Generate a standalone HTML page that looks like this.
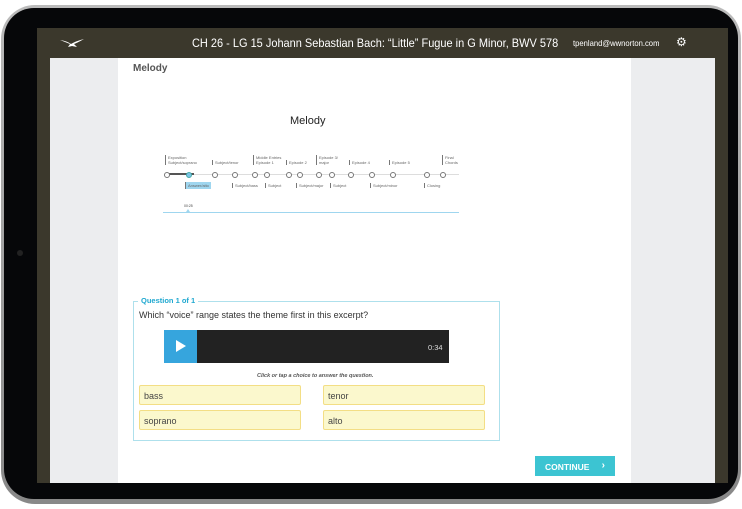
<!DOCTYPE html>
<html><head><style>
*{margin:0;padding:0;box-sizing:border-box}
body{width:742px;height:509px;background:#fff;position:relative;overflow:hidden;font-family:"Liberation Sans",sans-serif}
.frame{position:absolute;left:1px;top:5px;width:740px;height:499px;border-radius:34px;background:linear-gradient(#bbb,#888);}
.bez{position:absolute;left:4px;top:8px;width:734px;height:491px;border-radius:30px;background:#060709}
.cam{position:absolute;left:17px;top:250px;width:6px;height:6px;border-radius:50%;background:#222}
.screen{position:absolute;left:37px;top:28px;width:691px;height:455px;background:#3b382c;overflow:hidden}
.hdr{position:absolute;left:0;top:0;width:691px;height:30px;color:#fff}
.left{position:absolute;left:13px;top:30px;width:68px;height:425px;background:#ecedef}
.main{position:absolute;left:81px;top:30px;width:513px;height:425px;background:#fff}
.right{position:absolute;left:594px;top:30px;width:84px;height:425px;background:#ecedef}
.t{position:absolute;white-space:nowrap}
.lab{position:absolute;font-size:4px;color:#666;border-left:1px solid #777;padding-left:2px;line-height:5px}
.dot{position:absolute;top:172px;width:6px;height:6px;border:1px solid #777;border-radius:50%;background:#fff}
.ch{position:absolute;width:162px;height:20px;background:#fbf8cd;border:1px solid #f3de85;border-radius:2px;font-size:9px;color:#444;padding:5px 4px}
</style></head><body>
<div class="frame"></div><div class="bez"></div><div class="cam"></div>
<div class="screen">
<div class="hdr">
<svg style="position:absolute;left:22px;top:10px" width="26" height="10" viewBox="0 0 26 10"><path d="M1 2 Q8 3 12 6 Q17 3 25 1 Q18 5 15 6 L18 9 L13 8 L9 9 L11 6 Q6 4 1 2Z" fill="#fff"/></svg>
<div class="t" style="left:155px;top:8px;font-size:12px;transform:scaleX(0.915);transform-origin:0 0">CH 26 - LG 15 Johann Sebastian Bach: “Little” Fugue in G Minor, BWV 578</div>
<div class="t" style="left:536px;top:10px;font-size:8.5px;transform:scaleX(0.9);transform-origin:0 0">tpenland@wwnorton.com</div>
<div class="t" style="left:639px;top:7px;font-size:12px">⚙</div>
</div>
<div class="left"></div><div class="main"></div><div class="right"></div>
</div>
<div class="t" style="left:133px;top:63px;font-size:10px;font-weight:bold;color:#555">Melody</div>
<div class="t" style="left:290px;top:115px;font-size:11px;color:#222">Melody</div>
<div class="lab" style="left:165px;top:155px">Exposition<br>Subject/soprano</div>
<div class="lab" style="left:212px;top:160px">Subject/tenor</div>
<div class="lab" style="left:253px;top:155px">Middle Entries<br>Episode 1</div>
<div class="lab" style="left:286px;top:160px">Episode 2</div>
<div class="lab" style="left:316px;top:155px">Episode 3/<br>major</div>
<div class="lab" style="left:349px;top:160px">Episode 4</div>
<div class="lab" style="left:389px;top:160px">Episode 5</div>
<div class="lab" style="left:442px;top:155px">Final<br>Chords</div>
<div style="position:absolute;left:166px;top:174px;width:293px;height:1px;background:#ddd"></div>
<div style="position:absolute;left:166px;top:173px;width:28px;height:2px;background:#555"></div>
<div class="dot" style="left:164px"></div><div class="dot" style="left:186px;background:#7cc4e6;border-color:#4aa"></div>
<div class="dot" style="left:212px"></div><div class="dot" style="left:232px"></div><div class="dot" style="left:252px"></div><div class="dot" style="left:264px"></div><div class="dot" style="left:286px"></div><div class="dot" style="left:297px"></div><div class="dot" style="left:316px"></div><div class="dot" style="left:329px"></div><div class="dot" style="left:348px"></div><div class="dot" style="left:369px"></div><div class="dot" style="left:390px"></div><div class="dot" style="left:424px"></div><div class="dot" style="left:440px"></div>
<div class="lab" style="left:185px;top:182px;background:#9fd6ef;padding:1px 2px">Answer/alto</div>
<div class="lab" style="left:232px;top:183px">Subject/bass</div>
<div class="lab" style="left:265px;top:183px">Subject</div>
<div class="lab" style="left:296px;top:183px">Subject/major</div>
<div class="lab" style="left:330px;top:183px">Subject</div>
<div class="lab" style="left:370px;top:183px">Subject/minor</div>
<div class="lab" style="left:424px;top:183px">Closing</div>
<div class="t" style="left:184px;top:204px;font-size:3.5px;color:#444">00:25</div>
<div style="position:absolute;left:186px;top:209px;width:0;height:0;border-left:2px solid transparent;border-right:2px solid transparent;border-bottom:3px solid #9fd6ef"></div>
<div style="position:absolute;left:163px;top:212px;width:296px;height:1px;background:#9fd6ef"></div>
<div style="position:absolute;left:133px;top:301px;width:367px;height:140px;border:1px solid #aee0ec"></div>
<div class="t" style="left:138px;top:296px;font-size:7.5px;font-weight:bold;color:#1fa8d0;background:#fff;padding:0 3px">Question 1 of 1</div>
<div class="t" style="left:139px;top:310px;font-size:9px;color:#333">Which “voice” range states the theme first in this excerpt?</div>
<div style="position:absolute;left:164px;top:330px;width:285px;height:33px;background:#222"></div>
<div style="position:absolute;left:164px;top:330px;width:33px;height:33px;background:#36a5dd"></div>
<div style="position:absolute;left:176px;top:340px;width:0;height:0;border-left:10px solid #fff;border-top:6px solid transparent;border-bottom:6px solid transparent"></div>
<div class="t" style="left:428px;top:343px;font-size:7.5px;color:#ddd">0:34</div>
<div class="t" style="left:257px;top:373px;font-size:5.5px;font-weight:bold;font-style:italic;color:#555">Click or tap a choice to answer the question.</div>
<div class="ch" style="left:139px;top:385px">bass</div>
<div class="ch" style="left:323px;top:385px">tenor</div>
<div class="ch" style="left:139px;top:410px">soprano</div>
<div class="ch" style="left:323px;top:410px">alto</div>
<div style="position:absolute;left:535px;top:456px;width:80px;height:20px;background:#3cc4d2;color:#fff;font-size:8.5px;padding:6px 10px;font-weight:bold">CONTINUE <span style="position:absolute;right:10px;top:4px;font-size:10px">›</span></div>
</body></html>
